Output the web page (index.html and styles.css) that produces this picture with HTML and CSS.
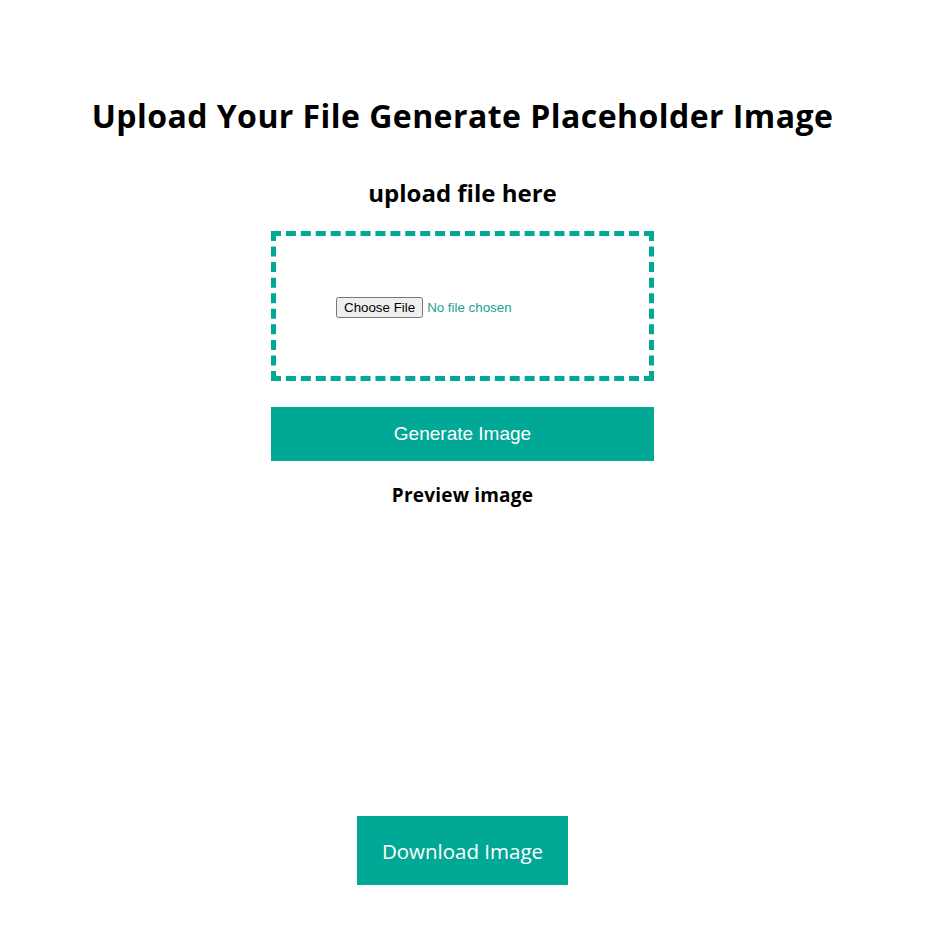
FILE: index.html
```html
<!DOCTYPE html>
<html lang="en">
<head>
<meta charset="utf-8">
<title>Placeholder Image Generator</title>
<link rel="stylesheet" href="styles.css">
</head>
<body>
<main class="page">
  <h1 class="title">Upload Your File Generate Placeholder Image</h1>
  <h2 class="subtitle">upload file here</h2>
  <div class="dropzone">
    <input type="file" class="file-input">
  </div>
  <button class="generate-btn" type="button">Generate Image</button>
  <h3 class="preview-title">Preview image</h3>
  <div class="preview-area"></div>
  <button class="download-btn" type="button">Download Image</button>
</main>
</body>
</html>
```

FILE: styles.css
```css
* { box-sizing: border-box; }
html, body { margin: 0; padding: 0; background: #ffffff; }
body { font-family: "Open Sans", "Liberation Sans", sans-serif; color: #000; }

.page {
  width: 925px;
  display: flex;
  flex-direction: column;
  align-items: center;
  padding-top: 95px;
}

.title {
  margin: 0;
  font-size: 32px;
  line-height: 42px;
  font-weight: 700;
  letter-spacing: 0.45px;
}

.subtitle {
  margin: 40px 0 0;
  font-size: 24px;
  line-height: 32px;
  font-weight: 700;
}

.dropzone {
  margin-top: 22px;
  width: 383px;
  height: 150px;
  border: 5px dashed #00a896;
  display: flex;
  align-items: center;
  padding-left: 60px;
  padding-top: 2px;
  color: #1d9f8f;
}

.file-input {
  font-family: Arial, "Liberation Sans", sans-serif;
  font-size: 13.33px;
  color: #1d9f8f;
}

.generate-btn {
  margin-top: 26px;
  width: 383px;
  height: 54px;
  border: none;
  background: #02a896;
  color: #ffffff;
  font-family: Arial, "Liberation Sans", sans-serif;
  font-size: 19px;
}

.preview-title {
  margin: 22px 0 0;
  font-size: 19px;
  line-height: 24px;
  font-weight: 700;
  letter-spacing: 0.2px;
}

.preview-area {
  height: 309px;
}

.download-btn {
  width: 211px;
  height: 69px;
  border: none;
  background: #02a896;
  color: #ffffff;
  font-family: "Open Sans", "Liberation Sans", sans-serif;
  font-size: 20.5px;
  font-weight: 400;
}
```
